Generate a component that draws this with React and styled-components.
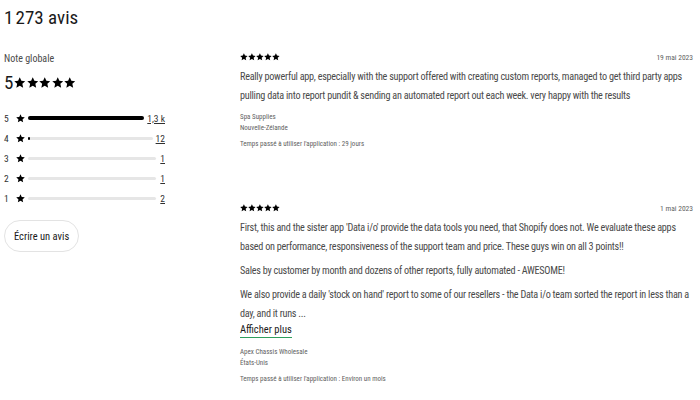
import React from "react";
import styled, { createGlobalStyle } from "styled-components";

const Global = createGlobalStyle`
  body {
    margin: 0;
    background: #fff;
    font-family: "Roboto Condensed", Roboto, "Liberation Sans", sans-serif;
    color: #1a1a1a;
  }
`;

const breakdown = [
  { stars: 5, count: "1,3 k", pct: 100 },
  { stars: 4, count: "12", pct: 1.5 },
  { stars: 3, count: "1", pct: 0 },
  { stars: 2, count: "1", pct: 0 },
  { stars: 1, count: "2", pct: 0 },
];

const reviews = [
  {
    date: "19 mai 2023",
    paragraphs: [
      "Really powerful app, especially with the support offered with creating custom reports, managed to get third party apps pulling data into report pundit & sending an automated report out each week. very happy with the results",
    ],
    shop: "Spa Supplies",
    country: "Nouvelle-Zélande",
    time: "29 jours",
  },
  {
    date: "1 mai 2023",
    paragraphs: [
      "First, this and the sister app 'Data i/o' provide the data tools you need, that Shopify does not. We evaluate these apps based on performance, responsiveness of the support team and price. These guys win on all 3 points!!",
      "Sales by customer by month and dozens of other reports, fully automated - AWESOME!",
      "We also provide a daily 'stock on hand' report to some of our resellers - the Data i/o team sorted the report in less than a day, and it runs ...",
    ],
    more: true,
    shop: "Apex Chassis Wholesale",
    country: "États-Unis",
    time: "Environ un mois",
  },
];

function Star({ size = 10 }) {
  return (
    <svg width={size} height={size} viewBox="0 0 20 20" fill="#000">
      <path d="M10 0.5l2.8 6.2 6.7.7-5 4.55 1.42 6.6L10 15.2l-5.92 3.35 1.42-6.6-5-4.55 6.7-.7z" />
    </svg>
  );
}

function Stars({ size, gap = 1 }) {
  return (
    <StarRow $gap={gap}>
      {[0, 1, 2, 3, 4].map((i) => (
        <Star key={i} size={size} />
      ))}
    </StarRow>
  );
}

export default function App() {
  return (
    <>
      <Global />
      <Page>
        <Title>1{"\u202F"}273 avis</Title>
        <Columns>
          <Summary>
            <Label>Note globale</Label>
            <Overall>
              <BigNum>5</BigNum>
              <Stars size={11.5} />
            </Overall>
            <Breakdown>
              {breakdown.map((b) => (
                <BarRow key={b.stars}>
                  <RowNum>{b.stars}</RowNum>
                  <Star size={9} />
                  <Track>
                    <Fill $full={b.pct >= 100} style={{ width: `${b.pct}%` }} />
                  </Track>
                  <Count>{b.count}</Count>
                </BarRow>
              ))}
            </Breakdown>
            <WriteButton>Écrire un avis</WriteButton>
          </Summary>
          <List>
            {reviews.map((r, i) => (
              <Review key={i}>
                <ReviewHead>
                  <Stars size={7.8} gap={0.3} />
                  <DateText>{r.date}</DateText>
                </ReviewHead>
                <Body>
                  {r.paragraphs.map((p, j) => (
                    <Para key={j}>{p}</Para>
                  ))}
                </Body>
                {r.more && <More>Afficher plus</More>}
                <Meta>
                  <MetaLine>{r.shop}</MetaLine>
                  <MetaLine>{r.country}</MetaLine>
                </Meta>
                <TimeLine>Temps passé à utiliser l'application : {r.time}</TimeLine>
              </Review>
            ))}
          </List>
        </Columns>
      </Page>
    </>
  );
}

const Page = styled.div`
  width: 700px;
  height: 400px;
  overflow: hidden;
  padding: 4px 7px 0 4px;
  box-sizing: border-box;
`;

const Title = styled.h1`
  margin: 0;
  font-size: 19px;
  font-weight: 400;
  line-height: 28px;
`;

const Columns = styled.div`
  display: flex;
  margin-top: 18px;
`;

const Summary = styled.div`
  width: 236px;
  flex: none;
  display: flex;
  flex-direction: column;
  align-items: flex-start;
`;

const Label = styled.div`
  font-size: 10px;
  color: #4a4a4a;
  line-height: 16px;
  margin-top: 1px;
`;

const Overall = styled.div`
  display: flex;
  align-items: center;
  gap: 1px;
  margin-top: 3px;
`;

const BigNum = styled.span`
  font-size: 19px;
  line-height: 26px;
`;

const StarRow = styled.span`
  display: inline-flex;
  gap: ${(p) => p.$gap}px;
`;

const Breakdown = styled.div`
  margin-top: 16px;
  display: flex;
  flex-direction: column;
  gap: 8px;
`;

const BarRow = styled.div`
  display: flex;
  align-items: center;
  height: 12px;
  width: 161px;
`;

const RowNum = styled.span`
  font-size: 9.5px;
  width: 12px;
  color: #303030;
`;

const Track = styled.div`
  flex: 1;
  height: 3px;
  border-radius: 2px;
  background: #e6e6e6;
  margin: 0 3px 0 3px;
  display: flex;
  align-items: center;
`;

const Fill = styled.div`
  height: ${(p) => (p.$full ? "4px" : "3px")};
  background: #000;
  border-radius: 2px;
`;

const Count = styled.span`
  font-size: 9.5px;
  text-decoration: underline;
  color: #303030;
  min-width: 6px;
  text-align: right;
`;

const WriteButton = styled.button`
  margin-top: 16px;
  height: 32px;
  padding: 0 9px;
  border: 1px solid #e3e3e3;
  border-radius: 16px;
  background: #fff;
  font-family: inherit;
  font-size: 10.5px;
  color: #1a1a1a;
`;

const List = styled.div`
  flex: 1;
  display: flex;
  flex-direction: column;
  gap: 51px;
`;

const Review = styled.div`
  display: flex;
  flex-direction: column;
`;

const ReviewHead = styled.div`
  display: flex;
  justify-content: space-between;
  align-items: center;
  height: 14px;
`;

const DateText = styled.span`
  font-size: 7.5px;
  color: #616161;
`;

const Body = styled.div`
  margin-top: 3px;
  display: flex;
  flex-direction: column;
  gap: 5px;
`;

const Para = styled.p`
  margin: 0;
  font-size: 10.2px;
  line-height: 19px;
  letter-spacing: -0.26px;
  color: #4a4a4a;
`;

const More = styled.span`
  align-self: flex-start;
  font-size: 10.5px;
  line-height: 14px;
  color: #1a1a1a;
  border-bottom: 1px solid #2e9e5c;
  margin-bottom: 2px;
`;

const Meta = styled.div`
  margin-top: 7px;
  display: flex;
  flex-direction: column;
`;

const MetaLine = styled.span`
  font-size: 7px;
  line-height: 11px;
  color: #616161;
`;

const TimeLine = styled.span`
  margin-top: 5px;
  font-size: 7px;
  line-height: 11px;
  color: #616161;
`;
